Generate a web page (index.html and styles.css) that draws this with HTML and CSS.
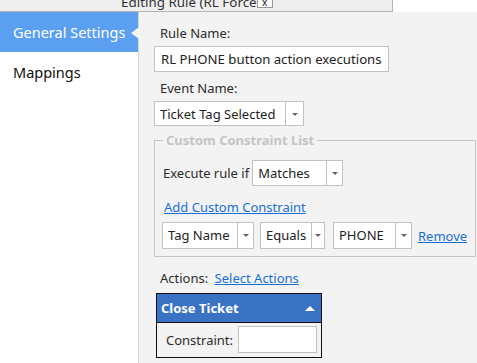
FILE: index.html
```html
<!DOCTYPE html>
<html lang="en">
<head>
    <meta charset="UTF-8">
    <meta name="viewport" content="width=device-width, initial-scale=1.0">
    <title>Editing Rule</title>
    <link rel="stylesheet" href="styles.css">
</head>
<body>
    <div class="titlebar">
        <span class="title">Editing Rule (RL Force</span>
        <span class="closeBox">x</span>
    </div>

    <div class="main">
        <nav class="sidebar">
            <div class="navItem active">General Settings</div>
            <div class="navItem">Mappings</div>
        </nav>

        <section class="panel">
            <div class="fieldLabel">Rule Name:</div>
            <div class="textbox ruleName">RL PHONE button action executions</div>

            <div class="fieldLabel event">Event Name:</div>
            <div class="select eventSelect">
                <span class="value">Ticket Tag Selected</span>
                <span class="arrow"></span>
            </div>

            <fieldset class="constraints">
                <legend>Custom Constraint List</legend>
                <div class="executeRow">
                    <span>Execute rule if</span>
                    <div class="select matchSelect">
                        <span class="value">Matches</span>
                        <span class="arrow"></span>
                    </div>
                </div>
                <a class="link addLink" href="#">Add Custom Constraint</a>
                <div class="constraintRow">
                    <div class="select tagSelect">
                        <span class="value">Tag Name</span>
                        <span class="arrow"></span>
                    </div>
                    <div class="select opSelect">
                        <span class="value">Equals</span>
                        <span class="arrow"></span>
                    </div>
                    <div class="select valSelect">
                        <span class="value">PHONE</span>
                        <span class="arrow"></span>
                    </div>
                    <a class="link" href="#">Remove</a>
                </div>
            </fieldset>

            <div class="actionsRow">
                <span>Actions:</span>
                <a class="link" href="#">Select Actions</a>
            </div>

            <div class="actionCard">
                <div class="cardHead">
                    <span>Close Ticket</span>
                    <span class="caret"></span>
                </div>
                <div class="cardBody">
                    <span>Constraint:</span>
                    <span class="textbox constraintBox"></span>
                </div>
            </div>
        </section>
    </div>
</body>
</html>
```

FILE: styles.css
```css
body{
    margin: 0;
    font-family: "Noto Sans", "Open Sans", sans-serif;
    font-size: 13px;
    color: #2b2b2b;
    background-color: #fff;
}

.titlebar{
    display: flex;
    width: 392px;
    height: 11px;
    overflow: hidden;
    background-color: #efefef;
    border-right: 1px solid #b4b4b4;
    border-bottom: 1px solid #b4b4b4;
    font-size: 13.4px;
    line-height: 14px;
}

.title{
    padding-left: 121px;
    margin-top: -5px;
    color: #333;
}

.closeBox{
    width: 14px;
    height: 7px;
    background-color: #fff;
    border: 1px solid #999;
    border-top: none;
    font-size: 10px;
    line-height: 4px;
    text-align: center;
    color: #111;
}

.main{
    display: flex;
    height: 351px;
}

.sidebar{
    width: 138px;
    border-right: 1px solid #d4d4d4;
    background-color: #fff;
}

.navItem{
    position: relative;
    height: 40px;
    line-height: 40px;
    padding-left: 13px;
    font-size: 14.5px;
    color: #111;
}

.navItem.active{
    background-color: #5a9ff0;
    color: #fff;
}

.navItem.active::after{
    content: "";
    position: absolute;
    right: -1px;
    top: 15px;
    border-top: 6px solid transparent;
    border-bottom: 6px solid transparent;
    border-right: 8px solid #f3f3f3;
}

.panel{
    flex: 1;
    background-color: #f3f3f3;
    padding: 10px 0 0 15px;
}

.fieldLabel{
    padding-left: 6px;
    line-height: 22px;
}

.fieldLabel.event{
    margin-top: 5px;
}

.textbox{
    display: block;
    box-sizing: border-box;
    background-color: #fff;
    border: 1px solid #c2c2c2;
    color: #222;
}

.ruleName{
    width: 235px;
    height: 26px;
    margin-top: 2px;
    padding-left: 6px;
    line-height: 24px;
    white-space: nowrap;
    font-size: 13.2px;
}

.select{
    display: flex;
    box-sizing: border-box;
    height: 26px;
    background-color: #fff;
    border: 1px solid #c2c2c2;
    color: #222;
}

.select .value{
    flex: 1;
    padding-left: 5px;
    line-height: 24px;
    white-space: nowrap;
}

.select .arrow{
    position: relative;
    width: 15px;
    border-left: 1px solid #c2c2c2;
}

.select .arrow::after{
    content: "";
    position: absolute;
    left: 5px;
    top: 11px;
    border-left: 3px solid transparent;
    border-right: 3px solid transparent;
    border-top: 3px solid #666;
}

.eventSelect{
    width: 150px;
    height: 25px;
    margin-top: 2px;
}

.eventSelect .arrow{
    width: 17px;
}

.eventSelect .arrow::after{
    left: 6px;
}

.constraints{
    box-sizing: border-box;
    width: 318px;
    margin: 5px 0 0 0;
    padding: 0 8px 7px 8px;
    border: 1px solid #c6c6c6;
}

.constraints legend{
    padding: 0 3px;
    font-weight: bold;
    line-height: 18px;
    color: #c4c4c4;
}

.executeRow{
    display: flex;
    align-items: center;
    gap: 3px;
    margin-top: 11px;
}

.matchSelect{
    width: 91px;
}

.link{
    color: #1b6fd4;
    text-decoration: underline;
}

.addLink{
    display: block;
    margin-top: 11px;
    padding-left: 1px;
    line-height: 20px;
    width: max-content;
}

.constraintRow{
    display: flex;
    align-items: center;
    margin-top: 5px;
    margin-left: -1px;
}

.constraintRow .select{
    height: 27px;
}

.tagSelect{
    width: 92px;
    margin-right: 6px;
}

.opSelect{
    width: 65px;
    margin-right: 8px;
}

.opSelect .arrow{
    width: 12px;
}

.opSelect .arrow::after{
    left: 3px;
}

.valSelect{
    width: 79px;
    margin-right: 6px;
}

.actionsRow{
    margin-top: 11px;
    padding-left: 6px;
    line-height: 20px;
}

.actionsRow .link{
    margin-left: 3px;
}

.actionCard{
    width: 166px;
    box-sizing: border-box;
    margin: 5px 0 0 2px;
    border: 1px solid #111;
}

.cardHead{
    display: flex;
    align-items: center;
    justify-content: space-between;
    height: 28px;
    padding: 0 6px 0 4px;
    background-color: #3a72c4;
    border-bottom: 1px solid #111;
    color: #fff;
    font-weight: bold;
}

.caret{
    border-left: 5px solid transparent;
    border-right: 5px solid transparent;
    border-bottom: 5px solid #fff;
}

.cardBody{
    display: flex;
    align-items: center;
    gap: 5px;
    padding: 3px 4px 4px 9px;
}

.constraintBox{
    width: 80px;
    height: 27px;
    margin-left: auto;
}
```
